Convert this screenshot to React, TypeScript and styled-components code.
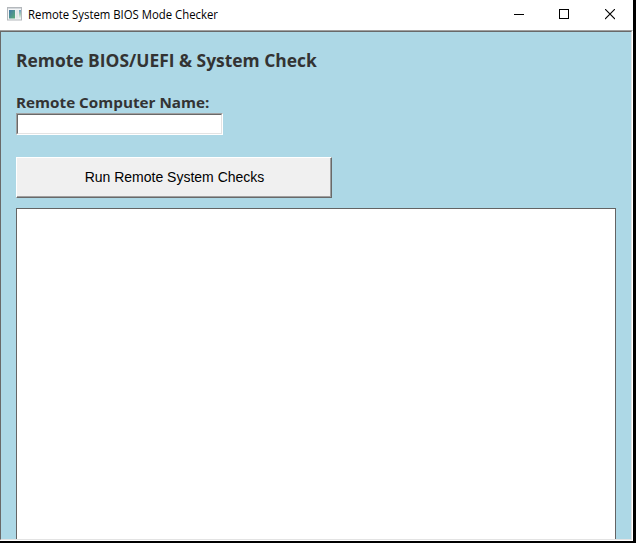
import React from "react";
import styled, { createGlobalStyle } from "styled-components";

const Global = createGlobalStyle`
  * { box-sizing: border-box; }
  html, body { margin: 0; background: #000; overflow: hidden; }
`;

const Screen = styled.div`
  width: 636px;
  height: 543px;
  background: #000;
  overflow: hidden;
`;

const Window = styled.div`
  display: flex;
  flex-direction: column;
  width: 633px;
  height: 541px;
  background: #fff;
  font-family: "Open Sans", "Noto Sans", sans-serif;
`;

const TitleBar = styled.header`
  display: flex;
  align-items: center;
  height: 30px;
  flex: none;
  padding-left: 7px;
`;

const Title = styled.span<{ $scale: number }>`
  flex: 1;
  margin-left: 6px;
  font-size: 12px;
  line-height: 16px;
  color: #000;
  white-space: nowrap;
  transform: scaleX(${(p) => p.$scale});
  transform-origin: left;
`;

const Caption = styled.button`
  display: flex;
  align-items: center;
  justify-content: center;
  width: 45.5px;
  height: 28px;
  padding: 0;
  border: 0;
  background: transparent;
`;

const Controls = styled.div`
  display: flex;
`;

const Frame = styled.div`
  flex: 1;
  min-height: 0;
  display: flex;
  border-top: 1px solid #a0a0a0;
  border-right: 1px solid #fff;
  border-bottom: 1px solid #fff;
`;

const Page = styled.main`
  flex: 1;
  display: flex;
  flex-direction: column;
  align-items: flex-start;
  overflow: hidden;
  padding: 15px 15px 0;
  background: #add8e6;
  border: 1px solid;
  border-color: #696969 #e3e3e3 #e3e3e3 #696969;
`;

const Heading = styled.h1<{ $scale: number }>`
  margin: 0;
  height: 26px;
  font-size: 18px;
  line-height: 26px;
  font-weight: 700;
  color: #333;
  white-space: nowrap;
  transform: scaleX(${(p) => p.$scale});
  transform-origin: left;
`;

const Label = styled.label<{ $scale: number }>`
  margin-top: 19px;
  height: 21px;
  font-size: 15px;
  line-height: 20px;
  font-weight: 700;
  color: #333;
  white-space: nowrap;
  transform: scaleX(${(p) => p.$scale});
  transform-origin: left;
`;

const FieldFrame = styled.div`
  width: 207px;
  height: 22px;
  flex: none;
  border: 1px solid;
  border-color: #a0a0a0 #fff #fff #a0a0a0;
`;

const Field = styled.input`
  display: block;
  width: 100%;
  height: 100%;
  padding: 0 1px;
  background: #fff;
  border: 1px solid;
  border-color: #696969 #e3e3e3 #e3e3e3 #696969;
  border-radius: 0;
  outline: 0;
`;

const RunButton = styled.button`
  width: 316px;
  height: 41px;
  flex: none;
  margin-top: 22px;
  padding: 0 0 2px 1px;
  border: 1px solid;
  border-color: #fff #696969 #696969 #fff;
  box-shadow: inset -1px -1px 0 #a0a0a0;
  background: #f0f0f0;
  color: #000;
  font-family: "Liberation Sans", Arial, sans-serif;
  font-size: 14px;
  line-height: 16px;
`;

const Output = styled.section`
  width: 600px;
  flex: 1;
  margin-top: 10px;
  background: #fff;
  border: 1px solid #646464;
  border-bottom: 0;
`;

const IconDrawing = styled.svg`
  flex: none;
  margin-bottom: 2px;
`;

const AppIcon = () => (
  <IconDrawing width="15" height="14" viewBox="0 0 15 14">
    <defs>
      <linearGradient id="pane" x1="0" y1="0" x2="1" y2="1">
        <stop offset="0" stopColor="#4277a8" />
        <stop offset="1" stopColor="#5cad76" />
      </linearGradient>
      <linearGradient id="side" x1="0" y1="0" x2="0" y2="1">
        <stop offset="0" stopColor="#6f9fc4" />
        <stop offset="0.5" stopColor="#a5cdb8" />
        <stop offset="1" stopColor="#f0f3f1" />
      </linearGradient>
    </defs>
    <rect x=".5" y=".5" width="14" height="12.5" fill="#f5f6f7" stroke="#b4b8bc" />
    <rect x="1" y="1" width="13" height="1" fill="#d4d8dc" />
    <rect x="2" y="3" width="6" height="8.5" fill="url(#pane)" />
    <rect x="8.5" y="3" width="3" height="8.5" fill="#e4e6e8" />
    <rect x="12" y="3" width="2" height="8.5" fill="url(#side)" />
  </IconDrawing>
);

export default function App() {
  return (
    <Screen>
      <Global />
      <Window>
        <TitleBar>
          <AppIcon />
          <Title $scale={0.946}>Remote System BIOS Mode Checker</Title>
          <Controls>
            <Caption aria-label="Minimize">
              <svg width="10" height="11" shapeRendering="crispEdges">
                <path d="M0 4.5h10" stroke="#000" />
              </svg>
            </Caption>
            <Caption aria-label="Maximize">
              <svg width="11" height="12" shapeRendering="crispEdges">
                <path d="M.5.5h9v9h-9z" fill="none" stroke="#000" />
              </svg>
            </Caption>
            <Caption aria-label="Close">
              <svg width="10" height="12">
                <path d="M0 0l10 10M10 0L0 10" stroke="#000" strokeWidth="1.1" />
              </svg>
            </Caption>
          </Controls>
        </TitleBar>
        <Frame>
          <Page>
            <Heading $scale={0.968}>Remote BIOS/UEFI &amp; System Check</Heading>
            <Label $scale={1.017} htmlFor="computer">Remote Computer Name:</Label>
            <FieldFrame>
              <Field id="computer" />
            </FieldFrame>
            <RunButton>Run Remote System Checks</RunButton>
            <Output />
          </Page>
        </Frame>
      </Window>
    </Screen>
  );
}
